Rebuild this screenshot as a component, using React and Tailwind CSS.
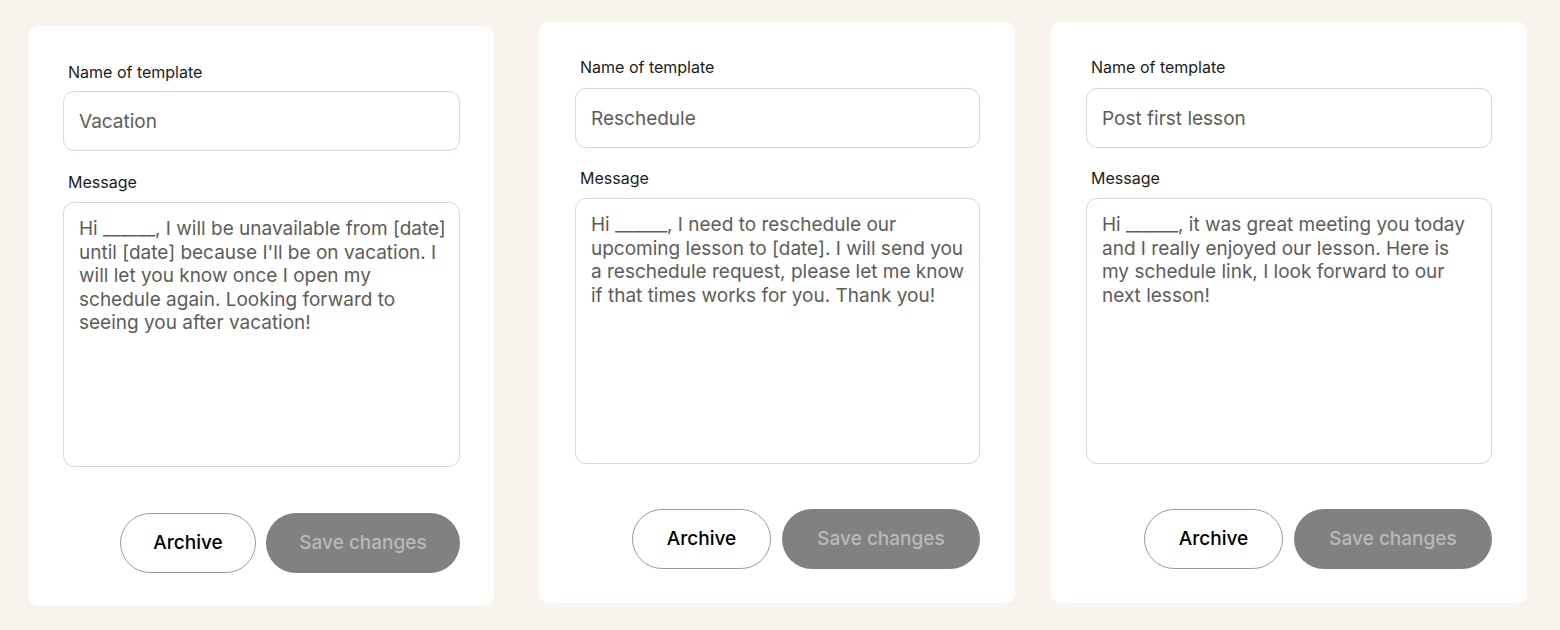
import React from "react";

const cards = [
  {
    name: "Vacation",
    lines: [
      "Hi ______, I will be unavailable from [date]",
      "until [date] because I'll be on vacation. I",
      "will let you know once I open my",
      "schedule again. Looking forward to",
      "seeing you after vacation!",
    ],
    card: "mt-[26px] w-[465px] h-[580px] px-[34px] pt-[36px]",
    input: "mt-[9px]",
    msg: "mt-[21px]",
    area: "h-[265px]",
    btns: "mt-[46px] gap-[10px]",
    archive: "w-[136px]",
    save: "w-[194px]",
  },
  {
    name: "Reschedule",
    lines: [
      "Hi ______, I need to reschedule our",
      "upcoming lesson to [date]. I will send you",
      "a reschedule request, please let me know",
      "if that times works for you. Thank you!",
    ],
    card: "mt-[22px] ml-[45px] w-[476px] h-[581px] pl-[36px] pr-[35px] pt-[35px]",
    input: "mt-[11px]",
    msg: "mt-[20px]",
    area: "h-[266px]",
    btns: "mt-[45px] gap-[11px]",
    archive: "w-[139px]",
    save: "w-[198px]",
  },
  {
    name: "Post first lesson",
    lines: [
      "Hi ______, it was great meeting you today",
      "and I really enjoyed our lesson. Here is",
      "my schedule link, I look forward to our",
      "next lesson!",
    ],
    card: "mt-[22px] ml-[36px] w-[476px] h-[581px] pl-[35px] pr-[35px] pt-[35px]",
    input: "mt-[11px]",
    msg: "mt-[20px]",
    area: "h-[266px]",
    btns: "mt-[45px] gap-[11px]",
    archive: "w-[139px]",
    save: "w-[198px]",
  },
];

function Card({ c }) {
  return (
    <div className={"bg-white rounded-[9px] flex flex-col shrink-0 " + c.card}>
      <div className="text-[16px] leading-[20px] text-[#1c1c1c] pl-[5px]">Name of template</div>
      <div
        className={
          "h-[60px] rounded-[11px] border border-[#dcd8d1] flex items-center pl-[15px] pt-[2px] text-[19px] text-[#5e5c5a] " +
          c.input
        }
      >
        {c.name}
      </div>
      <div className={"text-[16px] leading-[20px] text-[#1c1c1c] pl-[5px] " + c.msg}>Message</div>
      <div
        className={
          "mt-[10px] rounded-[11px] border border-[#dcd8d1] pl-[15px] pt-[14px] text-[19px] leading-[23.5px] text-[#5e5c5a] " +
          c.area
        }
      >
        {c.lines.map((l, i) => (
          <div key={i} className="whitespace-nowrap">
            {l}
          </div>
        ))}
      </div>
      <div className={"flex justify-end " + c.btns}>
        <button
          className={
            "h-[60px] rounded-full border border-[#9c9c9c] bg-white text-[19px] font-medium text-black " + c.archive
          }
        >
          Archive
        </button>
        <button
          className={"h-[60px] rounded-full bg-[#818181] text-[19px] font-medium text-[#b9b9b9] " + c.save}
        >
          Save changes
        </button>
      </div>
    </div>
  );
}

export default function App() {
  return (
    <div
      className="w-[1560px] h-[630px] bg-[#f8f4ed] flex items-start pl-[29px]"
      style={{ fontFamily: "Inter, 'Noto Sans', sans-serif" }}
    >
      {cards.map((c, i) => (
        <Card key={i} c={c} />
      ))}
    </div>
  );
}
